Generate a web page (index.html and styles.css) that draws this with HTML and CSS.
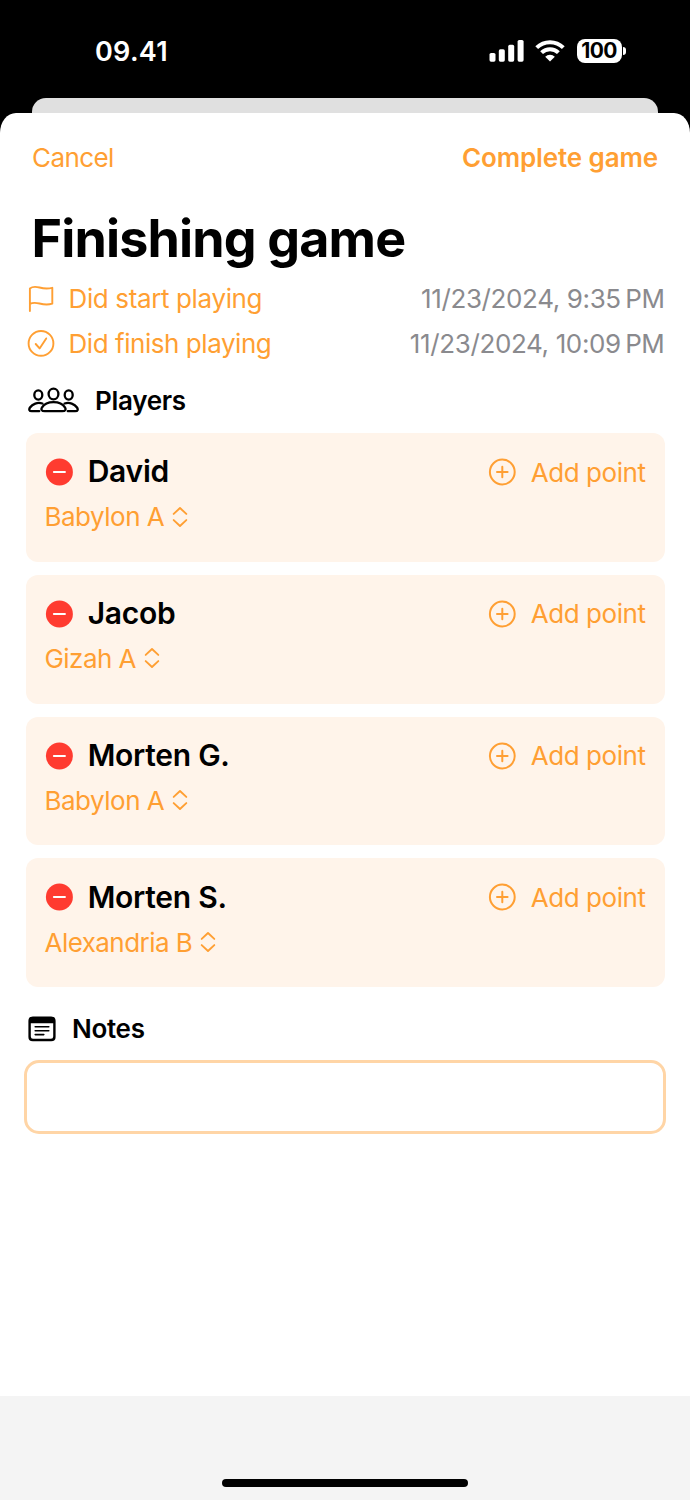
FILE: index.html
```
<!DOCTYPE html>
<html lang="en">
<head>
<meta charset="utf-8">
<title>Finishing game</title>
<link rel="stylesheet" href="styles.css">
</head>
<body>
<svg class="defs" aria-hidden="true">
  <symbol id="minus" viewBox="0 0 28 28"><circle cx="14.4" cy="14" r="13.5" fill="#ff3b30"/><path d="M8.9 14H19.9" stroke="#fff" stroke-width="2.1" stroke-linecap="round"/></symbol>
  <symbol id="plus" viewBox="0 0 28 28"><g fill="none" stroke="currentColor" stroke-width="2" stroke-linecap="round"><circle cx="14.3" cy="14" r="12.4"/><path d="M9 14H19.6M14.3 8.7V19.3"/></g></symbol>
  <symbol id="updown" viewBox="0 0 16 22"><path d="M1.7 7.9L8 2L14.3 7.9M1.7 14.1L8 20L14.3 14.1" fill="none" stroke="currentColor" stroke-width="1.9" stroke-linecap="round" stroke-linejoin="round"/></symbol>
</svg>
<div class="phone">
  <header class="status">
    <span class="time">09.41</span>
    <div class="indicators">
      <svg class="signal" viewBox="0 0 36 22" fill="#fff"><rect x="0.5" y="13" width="6" height="8.7" rx="1.6"/><rect x="9.8" y="9.3" width="6" height="12.4" rx="1.6"/><rect x="19.2" y="4.8" width="6" height="16.9" rx="1.6"/><rect x="28.6" y="0" width="6" height="21.7" rx="1.6"/></svg>
      <svg class="wifi" viewBox="0 0 30 22"><g fill="none" stroke="#fff" stroke-width="4"><path d="M1.7 7.6A19 19 0 0 1 28.3 7.6"/><path d="M6.6 12.6A12 12 0 0 1 23.4 12.6"/></g><path d="M15 21.6L10.2 16.8A6.9 6.9 0 0 1 19.8 16.8Z" fill="#fff"/></svg>
      <div class="battery"><span class="level">100</span><i class="cap"></i></div>
    </div>
  </header>
  <div class="sheet-behind"></div>
  <main class="sheet">
    <nav class="nav"><span class="cancel">Cancel</span><span class="complete">Complete game</span></nav>
    <h1 class="title">Finishing game</h1>
    <div class="row">
      <svg class="icon" viewBox="0 0 28 28"><path d="M2.9 26V3.4C5.3 1.6 8.9 1.6 12.5 2.5C16.5 3.6 20.5 4 25.3 2.8V18.7C20.5 20.2 16.5 19.6 12.5 18.5C8.9 17.6 5.3 17.6 2.9 18.9" fill="none" stroke="currentColor" stroke-width="1.9" stroke-linecap="round" stroke-linejoin="round"/></svg>
      <span class="label start">Did start playing</span><span class="date">11/23/2024, 9:35&#8239;PM</span>
    </div>
    <div class="row">
      <svg class="icon" viewBox="0 0 28 28"><g fill="none" stroke="currentColor" stroke-width="1.9" stroke-linecap="round" stroke-linejoin="round"><circle cx="14" cy="13.4" r="12.4"/><path d="M8.7 14L12.6 18.4L19.2 8.4"/></g></svg>
      <span class="label finish">Did finish playing</span><span class="date">11/23/2024, 10:09&#8239;PM</span>
    </div>
    <h2 class="heading players">
      <svg class="people" viewBox="0 0 51 26"><g fill="none" stroke="#000" stroke-width="2.3" stroke-linecap="round" stroke-linejoin="round"><ellipse cx="25.5" cy="7" rx="4.9" ry="5.4"/><path d="M16.8 24.2H34.2C37.5 24.2 38.3 22.6 37.1 20.6C35 17.3 30.8 15.2 25.5 15.2S16 17.3 13.9 20.6C12.7 22.6 13.5 24.2 16.8 24.2Z"/><ellipse cx="10.3" cy="8" rx="4" ry="4.6"/><ellipse cx="40.7" cy="8" rx="4" ry="4.6"/><path d="M11.2 24.2H3.8C1 24.2 .8 22.3 2 20.5C4.4 17 9.5 14.9 14.4 16.5M39.8 24.2H47.2C50 24.2 50.2 22.3 49 20.5C46.6 17 41.5 14.9 36.6 16.5"/></g></svg>
      <span class="players-text">Players</span>
    </h2>
    <section class="cards">
      <article class="card">
        <div class="who"><svg class="icon"><use href="#minus"/></svg><span class="name">David</span><span class="add"><svg class="icon"><use href="#plus"/></svg><span class="add-text">Add point</span></span></div>
        <div class="wonder"><span class="babylon">Babylon A</span><svg class="chev"><use href="#updown"/></svg></div>
      </article>
      <article class="card">
        <div class="who"><svg class="icon"><use href="#minus"/></svg><span class="name">Jacob</span><span class="add"><svg class="icon"><use href="#plus"/></svg><span class="add-text">Add point</span></span></div>
        <div class="wonder"><span class="gizah">Gizah A</span><svg class="chev"><use href="#updown"/></svg></div>
      </article>
      <article class="card">
        <div class="who"><svg class="icon"><use href="#minus"/></svg><span class="name">Morten G.</span><span class="add"><svg class="icon"><use href="#plus"/></svg><span class="add-text">Add point</span></span></div>
        <div class="wonder"><span class="babylon">Babylon A</span><svg class="chev"><use href="#updown"/></svg></div>
      </article>
      <article class="card">
        <div class="who"><svg class="icon"><use href="#minus"/></svg><span class="name">Morten S.</span><span class="add"><svg class="icon"><use href="#plus"/></svg><span class="add-text">Add point</span></span></div>
        <div class="wonder"><span class="alexandria">Alexandria B</span><svg class="chev"><use href="#updown"/></svg></div>
      </article>
    </section>
    <h2 class="heading notes">
      <svg class="note" viewBox="0 0 28 26"><path fill-rule="evenodd" d="M4.8.5H23.2Q27.6.5 27.6 4.8V20.9Q27.6 25.2 23.2 25.2H4.8Q.4 25.2 .4 20.9V4.8Q.4.5 4.8.5ZM2.8 7.2V20.6Q2.8 22.8 5 22.8H23Q25.2 22.8 25.2 20.6V7.2Z"/><path d="M7.2 10.8H20.8M7.2 14.7H20.8M7.2 18.6H15.8" stroke="#000" stroke-width="1.6" stroke-linecap="round"/></svg>
      <span>Notes</span>
    </h2>
    <div class="field"></div>
  </main>
  <footer class="bottom"><div class="home"></div></footer>
</div>
</body>
</html>
```
FILE: styles.css
```
* { box-sizing: border-box; }
body { margin: 0; background: #000; font-family: Inter, "Liberation Sans", sans-serif; color: #000; }
svg { display: block; flex: none; }
.defs { position: absolute; width: 0; height: 0; }
.phone { width: 690px; height: 1500px; display: flex; flex-direction: column; background: #000; white-space: nowrap; }
.status { height: 97.5px; flex: none; display: flex; justify-content: space-between; padding: 35px 64px 0 95px; color: #fff; }
.time { font-size: 27px; line-height: 33px; font-weight: 600; letter-spacing: 0.3px; }
.indicators { display: flex; align-items: center; height: 31px; }
.signal { width: 36px; height: 22px; margin-right: 10px; }
.wifi { width: 30px; height: 22px; margin-right: 12px; }
.battery { display: flex; align-items: center; gap: 1px; }
.level { width: 45px; height: 24px; border-radius: 8px; background: #fff; color: #000; font-size: 21px; line-height: 24px; font-weight: 700; text-align: center; letter-spacing: -0.7px; padding-right: 1px; }
.cap { width: 3px; height: 8px; border-radius: 0 3px 3px 0; background: #fff; }
.sheet-behind { height: 15.5px; flex: none; margin: 0 32px; border-radius: 14px 14px 0 0; background: #e0e0e0; }
.sheet { flex: 1; background: #fff; border-radius: 16px 16px 0 0 / 20px 20px 0 0; padding: 29px 25.5px 0; }
.nav { display: flex; justify-content: space-between; height: 32px; line-height: 32px; padding: 0 6.5px; color: #ff9f33; font-size: 26px; }
.cancel { letter-spacing: -0.6px; }
.complete { font-weight: 600; letter-spacing: -0.12px; }
.title { margin: 33px 0 0 6px; font-size: 52px; line-height: 64px; height: 70px; font-weight: 700; letter-spacing: -0.85px; }
.row { display: flex; align-items: center; height: 44.4px; font-size: 26px; line-height: 32px; color: #ff9f33; padding-left: 1px; }
.icon { width: 28px; height: 28px; }
.label { margin-left: 14px; }
.start { letter-spacing: -0.37px; }
.finish { letter-spacing: -0.45px; }
.date { margin-left: auto; color: #8a8a8e; letter-spacing: -0.37px; }
.heading { display: flex; align-items: center; margin: 0; font-size: 26px; line-height: 32px; font-weight: 600; letter-spacing: -0.3px; }
.players { height: 67.2px; padding: 2px 0 0 2.5px; gap: 16px; }
.players-text { padding-top: 1.5px; }
.people { width: 51px; height: 26px; }
.cards { display: flex; flex-direction: column; gap: 13px; }
.card { height: 128.8px; border-radius: 12px; background: #fff4ea; padding: 19px 19px 0; color: #ff9f33; font-size: 26px; line-height: 32px; }
.who { display: flex; align-items: center; height: 40px; padding-left: 0.6px; }
.name { margin-left: 14.6px; padding-bottom: 1.5px; color: #000; font-size: 30px; font-weight: 600; letter-spacing: -0.27px; }
.add { display: flex; align-items: center; gap: 15px; margin-left: auto; }
.add-text { letter-spacing: -0.45px; padding-top: 1.2px; }
.wonder { display: flex; align-items: center; gap: 8px; height: 32px; margin-top: 9.2px; }
.babylon { letter-spacing: -0.5px; }
.gizah { letter-spacing: -0.55px; }
.alexandria { letter-spacing: -0.55px; }
.chev { width: 16px; height: 22px; margin-bottom: 1px; }
.notes { height: 72.8px; padding: 11px 0 0 2.5px; gap: 16px; }
.note { width: 28px; height: 26px; }
.field { height: 74.5px; margin: 0 -1.5px; border: 3px solid #ffd5a6; border-radius: 15px; background: #fff; }
.bottom { height: 104px; flex: none; background: #f4f4f4; display: flex; justify-content: center; align-items: flex-end; padding-bottom: 13px; }
.home { width: 246px; height: 8px; border-radius: 4px; background: #000; }
```
